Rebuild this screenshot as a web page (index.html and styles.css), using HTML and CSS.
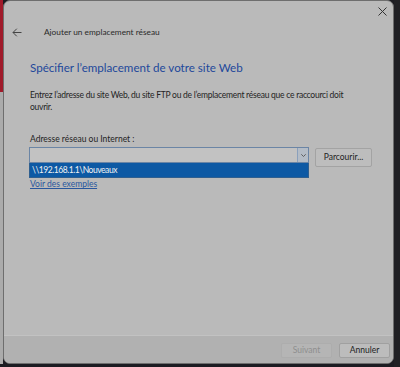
FILE: index.html
```html
<!DOCTYPE html>
<html lang="fr">
<head>
<meta charset="utf-8">
<link rel="stylesheet" href="styles.css">
</head>
<body>
<div class="screen">
  <div class="left-strip"><div class="red"></div><div class="gray"></div></div>
  <div class="window">
    <div class="content">
      <button class="close" aria-label="Fermer">
        <svg width="9" height="9" viewBox="0 0 9 9"><path d="M0.5 0.5L8.5 8.5M8.5 0.5L0.5 8.5" stroke="#333" stroke-width="1" fill="none"/></svg>
      </button>
      <div class="titlebar">
        <svg class="back" width="10" height="9" viewBox="0 0 10 9"><path d="M9.5 4.5H1M4.8 0.7L1 4.5L4.8 8.3" stroke="#444" stroke-width="1" fill="none"/></svg>
        <span class="title">Ajouter un emplacement réseau</span>
      </div>
      <div class="body">
        <h1 class="heading">Spécifier l’emplacement de votre site Web</h1>
        <p class="desc">Entrez l’adresse du site Web, du site FTP ou de l’emplacement réseau que ce raccourci doit ouvrir.</p>
        <div class="label">Adresse réseau ou Internet :</div>
        <div class="row">
          <div class="combo-wrap">
            <div class="combo">
              <div class="combo-input"></div>
              <div class="combo-btn">
                <svg width="5" height="3" viewBox="0 0 5 3"><path d="M0.3 0.3L2.5 2.5L4.7 0.3" stroke="#555" stroke-width="0.9" fill="none"/></svg>
              </div>
            </div>
            <div class="dropdown"><div class="item">\\192.168.1.1\Nouveaux</div></div>
          </div>
          <button class="btn browse">Parcourir...</button>
        </div>
        <a class="link">Voir des exemples</a>
      </div>
      <div class="footer">
        <button class="btn disabled">Suivant</button>
        <button class="btn cancel">Annuler</button>
      </div>
    </div>
  </div>
  <div class="right-strip"></div>
</div>
</body>
</html>
```
FILE: styles.css
```css
html, body {
  margin: 0;
  padding: 0;
}
body {
  width: 400px;
  height: 367px;
  background: #1c1c22;
  overflow: hidden;
  font-family: Lato, "Noto Sans", sans-serif;
  color: #222;
}
.screen {
  display: flex;
  width: 400px;
  height: 367px;
}
.left-strip {
  width: 3px;
  height: 364px;
  display: flex;
  flex-direction: column;
}
.left-strip .red {
  height: 92px;
  background: #a01a2a;
}
.left-strip .gray {
  flex: 1;
  background: #ababab;
}
.window {
  width: 391px;
  height: 364px;
  box-sizing: border-box;
  border: 1px solid #6e6e6e;
  border-radius: 7px;
  background: #bababa;
  overflow: hidden;
  position: relative;
}
.content {
  display: flex;
  flex-direction: column;
  height: 100%;
}
.close {
  position: absolute;
  top: 4px;
  right: 4px;
  width: 14px;
  height: 12px;
  padding: 0;
  border: 0;
  background: transparent;
  display: flex;
  align-items: center;
  justify-content: center;
}
.titlebar {
  height: 20px;
  margin-top: 21px;
  display: flex;
  align-items: center;
  padding-left: 8px;
}
.back {
  display: block;
}
.title {
  margin-left: 22px;
  font-size: 8.3px;
  color: #2a2a2a;
}
.body {
  flex: 1;
  padding-left: 26px;
}
.heading {
  margin: 18px 0 0;
  font-size: 11.6px;
  font-weight: normal;
  color: #22489a;
  line-height: 16px;
}
.desc {
  margin: 13px 0 0;
  font-size: 8.5px;
  letter-spacing: -0.25px;
  line-height: 12px;
  width: 336px;
  color: #242424;
}
.label {
  margin-top: 20px;
  font-size: 8.5px;
  line-height: 12px;
  color: #242424;
}
.row {
  display: flex;
  align-items: flex-start;
  margin-top: 2px;
}
.combo-wrap {
  width: 280px;
  margin-left: -1px;
}
.combo {
  height: 16px;
  box-sizing: border-box;
  border: 1px solid #6b85a5;
  display: flex;
  background: #c2c2c2;
}
.combo-input {
  flex: 1;
}
.combo-btn {
  width: 10px;
  border-left: 1px solid #8aa0bc;
  background: #b4bcc6;
  display: flex;
  align-items: center;
  justify-content: center;
}
.dropdown {
  background: #0d59a4;
  border: 1px solid #2f5f8f;
  border-top: 0;
  height: 14px;
}
.item {
  font-size: 8.5px;
  letter-spacing: -0.45px;
  line-height: 14px;
  color: #f2f2f2;
  padding-left: 2px;
}
.btn {
  font-family: inherit;
  font-size: 8.5px;
  color: #222;
  background: #bdbdbd;
  border: 1px solid #a3a3a3;
  border-radius: 2px;
  padding: 0;
  height: 15px;
  line-height: 13px;
}
.browse {
  margin-left: 6px;
  margin-top: 1px;
  width: 57px;
  height: 19px;
  line-height: 17px;
}
.link {
  display: block;
  margin-top: 0;
  font-size: 8.5px;
  line-height: 12px;
  color: #29579e;
  text-decoration: underline;
  width: max-content;
}
.footer {
  height: 28px;
  background: #b1b1b1;
  border-top: 1px solid #c2c2c2;
  display: flex;
  justify-content: flex-end;
  align-items: flex-start;
  padding-top: 7px;
  padding-right: 3px;
  box-sizing: border-box;
  gap: 7px;
}
.footer .btn {
  width: 51px;
}
.disabled {
  color: #8e8e8e;
  background: #b5b5b5;
  border-color: #adadad;
}
.cancel {
  background: #bcbcbc;
  border-color: #a0a0a0;
}
.right-strip {
  flex: 1;
  background: #202024;
}
```
